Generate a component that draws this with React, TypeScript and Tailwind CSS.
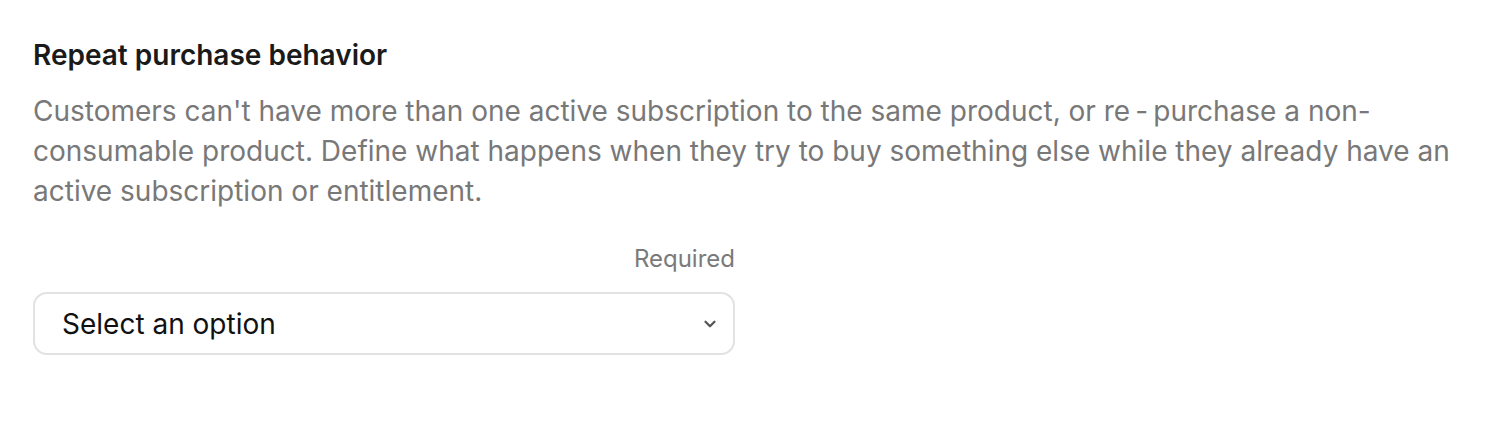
import React from "react";

export default function App() {
  return (
    <div className="min-h-screen bg-white px-[33px] pt-[37px] font-['Inter',sans-serif]">
      <h2 className="text-[28px] leading-[36px] font-semibold text-[#1a1a1a]">Repeat purchase behavior</h2>
      <p className="mt-[18px] text-[28px] leading-[40px] text-[#787878]">
        Customers can't have more than one active subscription to the same product, or re{"\u202F-\u202F"}purchase a non-consumable product.
        Define what happens when they try to buy something else while they already have an active subscription or entitlement.
      </p>
      <div className="mt-[32px] w-[702px]">
        <div className="text-right text-[24px] leading-[32px] text-[#7a7a7a]">Required</div>
        <div className="mt-[17px] flex h-[63px] items-center justify-between rounded-[14px] border-2 border-[#e2e2e2] pl-[27px] pr-[14px]">
          <span className="text-[28px] text-[#111]">Select an option</span>
          <svg width="18" height="18" viewBox="0 0 16 16" fill="none">
            <path d="M4 6l4 4 4-4" stroke="#555" strokeWidth="2" strokeLinecap="round" strokeLinejoin="round" />
          </svg>
        </div>
      </div>
    </div>
  );
}
